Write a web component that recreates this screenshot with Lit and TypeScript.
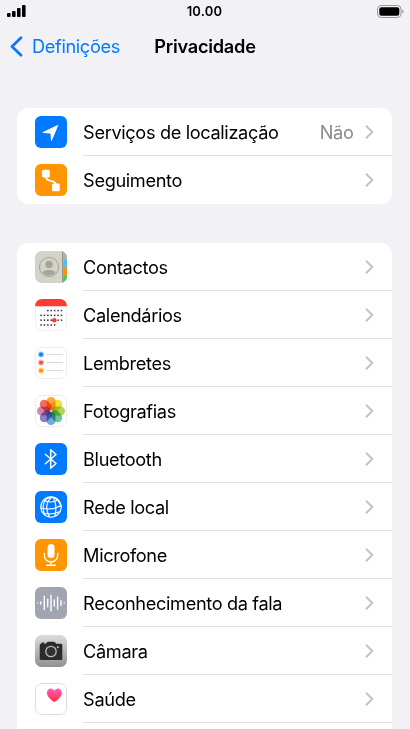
import {html, css, svg, LitElement, TemplateResult} from 'lit';
import {customElement, property} from 'lit/decorators.js';

const petals = [
  ['#fb9a1c', 0],
  ['#f0dc1e', 45],
  ['#a5cf3c', 90],
  ['#5cbc8c', 135],
  ['#5e9fdc', 180],
  ['#7a6fc0', 225],
  ['#c878ae', 270],
  ['#f5584a', 315],
];

// centre and half height of each bar in the waveform
const bars = [
  [2.8, 0.8], [5.8, 1.7], [9.3, 7.2], [12.7, 4.5], [16, 8.6], [19.3, 3.8], [22.6, 6.8], [26, 3], [29.2, 0.8],
];

// first column and number of days for each calendar line
const weeks = [[2, 5], [0, 7], [0, 7], [0, 5]];

const icons: Record<string, TemplateResult> = {
  location: svg`
    <rect width="32" height="32" rx="6" fill="#007aff"/>
    <path d="M23.400 9.100 16.800 24.700q-.4.8-.8 0L15.500 17.600 8 17q-1.200-.4 0-.9L22.700 9q.8-.3.7.1z" fill="#fff"/>`,
  tracking: svg`
    <rect width="32" height="32" rx="6" fill="#ff9500"/>
    <rect x="7" y="5.800" width="7.800" height="7.800" rx="1.500" fill="#fff"/>
    <rect x="17" y="19.500" width="7.800" height="7.800" rx="1.500" fill="#fff"/>
    <path d="M11 12.500c0 3.400 2 4 4.700 4.400 3.200.4 4.800 1.300 4.900 3.800" fill="none" stroke="#fff" stroke-width="1.700"/>`,
  contacts: svg`
    <clipPath id="clip"><rect width="32" height="32" rx="6.500"/></clipPath>
    <g clip-path="url(#clip)">
      <rect width="32" height="32" fill="#d4d3c8"/>
      <rect x="27" width="1.300" height="32" fill="#96958a"/>
      <rect x="28.300" width="4" height="8.300" fill="#b4b3a8"/>
      <rect x="28.300" y="8.300" width="4" height="8" fill="#56b9ec"/>
      <rect x="28.300" y="16.300" width="4" height="8" fill="#fb8c10"/>
      <rect x="28.300" y="24.300" width="4" height="8" fill="#40cc58"/>
    </g>
    <clipPath id="face"><circle cx="14" cy="16" r="8.600"/></clipPath>
    <circle cx="14" cy="16" r="9.600" fill="none" stroke="#a5a39a" stroke-width="1"/>
    <circle cx="14" cy="13.400" r="3.600" fill="#a5a39a"/>
    <ellipse cx="14" cy="23.200" rx="7.400" ry="4.200" fill="#a5a39a" clip-path="url(#face)"/>`,
  calendar: svg`
    <rect x=".5" y=".5" width="31" height="31" rx="6.500" fill="#fff" stroke="#efeff1"/>
    <path d="M0 7.200V7a7 7 0 0 1 7-7h18a7 7 0 0 1 7 7v.2z" fill="#ff3b30"/>
    ${weeks.map(([start, count], y) => Array.from({length: count}, (_, i) => svg`
      <rect x=${5.3 + (start + i) * 3.4} y=${10.8 + y * 4.8} width="1.500" height="1.500" fill="#333"/>`))}
    <circle cx="19.200" cy="21.200" r="2.300" fill="#ff3b30"/>`,
  reminders: svg`
    <rect x=".5" y=".5" width="31" height="31" rx="6.500" fill="#fff" stroke="#ececee"/>
    ${['#0a7cff', '#ff453d', '#ff9500'].map((color, i) => svg`
      <circle cx="6" cy=${7.5 + i * 8.1} r="3.100" fill=${color} opacity=".4"/>
      <circle cx="6" cy=${7.5 + i * 8.1} r="1.900" fill=${color}/>
      <rect x="11.500" y=${6.9 + i * 8.1} width="16.500" height="1" fill="#d7d7da"/>`)}`,
  photos: svg`
    <rect x=".5" y=".5" width="31" height="31" rx="6.500" fill="#fff" stroke="#ececee"/>
    ${petals.map(([color, angle]) => svg`
      <rect class="petal" x="11.500" y="2" width="9" height="13.200" rx="4.500" fill=${color} transform="rotate(${angle} 16 16)"/>`)}`,
  bluetooth: svg`
    <rect width="32" height="32" rx="6" fill="#007aff"/>
    <path d="M10.300 11.200 21 20.500l-5.300 4.800V6.700L21 11.500l-10.700 9.300" fill="none" stroke="#fff" stroke-width="1.500" stroke-linejoin="round" stroke-linecap="round"/>`,
  network: svg`
    <rect width="32" height="32" rx="6" fill="#007aff"/>
    <g fill="none" stroke="#fff" stroke-width="1.150">
      <circle cx="16" cy="16" r="10.200"/>
      <path d="M17.500 6C11 9.500 10 18 14.500 26M17.500 6c3.500 5 4.300 12 2.200 19.300M17.500 6c5 2 7.800 6 8.300 10M17.500 6C9 6.500 6 15 9.800 24"/>
      <path d="M8.500 9.300c4.500 2.200 10 2.200 14.800-.6M5.900 17c6.500 1.700 14 1 20-2.200M8.400 22.500c5.500.9 12 .4 16.600-2"/>
    </g>`,
  microphone: svg`
    <rect width="32" height="32" rx="6" fill="#ff9500"/>
    <rect x="12.500" y="5" width="7" height="14" rx="3.500" fill="#fff"/>
    <path d="M9.300 14.500v1.700a6.700 6.700 0 0 0 13.400 0v-1.700M16 22.700v3.500M11.600 26.200h8.800" fill="none" stroke="#fff" stroke-width="1.400" stroke-linecap="round"/>`,
  speech: svg`
    <rect width="32" height="32" rx="6" fill="#a0a5b0"/>
    ${bars.map(([x, h]) => svg`
      <rect x=${x - 0.7} y=${16 - h} width="1.400" height=${h * 2} rx=".7" fill="#fff"/>`)}`,
  camera: svg`
    <linearGradient id="metal" x2="0" y2="1">
      <stop stop-color="#dcdcdc"/><stop offset="1" stop-color="#919193"/>
    </linearGradient>
    <rect width="32" height="32" rx="6.500" fill="url(#metal)"/>
    <path d="M6 8.700h4.600l1.500-1.500q.5-.5 1.200-.5h5.400q.7 0 1.200.5l1.500 1.500H26q1.300 0 1.300 1.300v13.700q0 1.300-1.300 1.300H6q-1.300 0-1.300-1.300V10q0-1.300 1.300-1.300z" fill="#2b2b2c"/>
    <rect x="6.500" y="7.500" width="2.800" height="1.500" fill="#2b2b2c"/>
    <circle cx="16" cy="16.500" r="5.200" fill="#303132" stroke="#b9b9ba" stroke-width="1.300"/>
    <circle cx="22.800" cy="12.300" r="1" fill="#ffcc00"/>`,
  health: svg`
    <linearGradient id="heart" x2="0" y2="1">
      <stop stop-color="#ff5fb4"/><stop offset="1" stop-color="#ff2d3e"/>
    </linearGradient>
    <rect x=".5" y=".5" width="31" height="31" rx="6.500" fill="#fff" stroke="#dcdcdf"/>
    <path d="M19.400 19C16 16.700 12 13.700 12 9.900 12 7.300 13.700 5.600 15.800 5.600c1.600 0 2.900.9 3.600 2.300.7-1.400 2-2.300 3.600-2.300 2.100 0 3.800 1.700 3.800 4.300 0 3.800-4 6.800-7.400 9.100z" fill="url(#heart)"/>`,
};

@customElement('settings-row')
export class SettingsRow extends LitElement {
  @property() icon = '';
  @property() label = '';
  @property() value = '';

  static styles = css`
    :host {
      display: flex;
      height: 48.06px;
      padding-left: 17.5px;
      box-sizing: border-box;
    }

    .icon {
      flex: none;
      width: 32px;
      height: 32px;
      margin: 8px 16.2px 0 0;
    }

    .petal {
      mix-blend-mode: multiply;
      opacity: 0.88;
    }

    .content {
      flex: 1;
      display: flex;
      align-items: center;
      padding: 1px 18px 0 0;
      border-bottom: 1px solid #dfdfe2;
    }

    :host([last]) .content {
      border-bottom-color: transparent;
    }

    .label {
      flex: 1;
      white-space: nowrap;
    }

    .value {
      color: #8a8a8e;
      margin-right: 11.5px;
    }

    .chevron {
      width: 9px;
      height: 14px;
    }
  `;

  render() {
    return html`
      <svg class="icon" viewBox="0 0 32 32">${icons[this.icon]}</svg>
      <div class="content">
        <span class="label">${this.label}</span>
        ${this.value ? html`<span class="value">${this.value}</span>` : null}
        <svg class="chevron" viewBox="0 0 9 14">
          <path d="M1.500 1.300 7.300 7l-5.800 5.700" fill="none" stroke="#c3c3c6" stroke-width="2" stroke-linecap="round" stroke-linejoin="round"/>
        </svg>
      </div>
    `;
  }
}

@customElement('app-root')
export class AppRoot extends LitElement {
  static styles = css`
    :host {
      display: block;
      height: 729px;
      overflow: hidden;
      background: #f2f1f6;
      color: #000;
      font-family: Inter, 'Liberation Sans', sans-serif;
      font-size: 18.2px;
      letter-spacing: -0.36px;
    }

    .status {
      display: grid;
      grid-template-columns: 1fr auto 1fr;
      align-items: center;
      height: 22px;
      padding: 0 5px 0 4px;
      font-size: 13px;
      font-weight: 600;
      letter-spacing: 0.2px;
    }

    .signal {
      width: 19px;
      height: 12px;
      margin-left: 3px;
    }

    .battery {
      justify-self: end;
      width: 27px;
      height: 13px;
      margin-right: 1px;
    }

    .nav {
      display: grid;
      grid-template-columns: 1fr auto 1fr;
      align-items: center;
      height: 48px;
      padding: 0 10px;
    }

    .back {
      display: flex;
      align-items: center;
      gap: 9px;
      color: #007aff;
    }

    .arrow {
      width: 13px;
      height: 21px;
    }

    .title {
      font-weight: 600;
      letter-spacing: -0.25px;
    }

    .group {
      margin: 38px 18px 0 17.4px;
      border-radius: 11px;
      background: #fff;
      overflow: hidden;
    }

    .group + .group {
      margin-top: 38.6px;
    }
  `;

  render() {
    return html`
      <div class="status">
        <svg class="signal" viewBox="0 0 19 12">
          <rect x="0" y="8" width="3.600" height="4" rx="1"/>
          <rect x="5" y="6" width="3.600" height="6" rx="1"/>
          <rect x="10" y="3" width="3.600" height="9" rx="1"/>
          <rect x="15" y="0" width="3.600" height="12" rx="1"/>
        </svg>
        <span>10.00</span>
        <svg class="battery" viewBox="0 0 27 13">
          <rect x=".5" y=".5" width="23.500" height="12" rx="3.500" fill="none" stroke="#99989c"/>
          <rect x="2.300" y="2.200" width="20" height="8.600" rx="2"/>
          <path d="M25.200 4.500q1.400.6 1.400 2t-1.400 2z" fill="#99989c"/>
        </svg>
      </div>
      <div class="nav">
        <div class="back">
          <svg class="arrow" viewBox="0 0 13 21">
            <path d="M11 1.700 2 10.500l9 8.800" fill="none" stroke="#007aff" stroke-width="2.700" stroke-linecap="round" stroke-linejoin="round"/>
          </svg>
          <span>Definições</span>
        </div>
        <span class="title">Privacidade</span>
      </div>
      <div class="group">
        <settings-row icon="location" label="Serviços de localização" value="Não"></settings-row>
        <settings-row icon="tracking" label="Seguimento" last></settings-row>
      </div>
      <div class="group">
        <settings-row icon="contacts" label="Contactos"></settings-row>
        <settings-row icon="calendar" label="Calendários"></settings-row>
        <settings-row icon="reminders" label="Lembretes"></settings-row>
        <settings-row icon="photos" label="Fotografias"></settings-row>
        <settings-row icon="bluetooth" label="Bluetooth"></settings-row>
        <settings-row icon="network" label="Rede local"></settings-row>
        <settings-row icon="microphone" label="Microfone"></settings-row>
        <settings-row icon="speech" label="Reconhecimento da fala"></settings-row>
        <settings-row icon="camera" label="Câmara"></settings-row>
        <settings-row icon="health" label="Saúde"></settings-row>
        <settings-row></settings-row>
      </div>
    `;
  }
}
